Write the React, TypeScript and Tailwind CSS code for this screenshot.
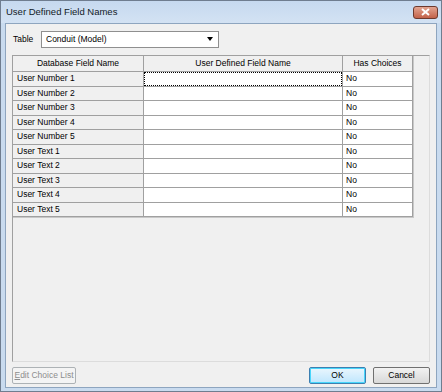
import React from "react";

const rows = [
  "User Number 1",
  "User Number 2",
  "User Number 3",
  "User Number 4",
  "User Number 5",
  "User Text 1",
  "User Text 2",
  "User Text 3",
  "User Text 4",
  "User Text 5",
];

const font = { fontFamily: '"Liberation Sans", Arial, sans-serif' };

const App = () => {
  return (
    <div
      className="w-[442px] h-[392px] flex flex-col bg-[#c9dbef] border border-[#6f7d8f] text-[8.5px] text-black"
      style={font}
    >
      {/* title bar */}
      <div className="h-[22px] shrink-0 flex items-center justify-between pl-[5px] pr-[3px] bg-gradient-to-b from-[#c6d9ef] to-[#d3e2f3]">
        <span className="text-[9.5px] text-[#111a26]">User Defined Field Names</span>
        <button className="w-[25px] h-[13px] rounded-[3px] border border-[#6d3a2e] bg-gradient-to-b from-[#e3a591] to-[#c2624a] flex items-center justify-center">
          <svg width="9" height="8" viewBox="0 0 9 8">
            <path d="M1 1 L8 7 M8 1 L1 7" stroke="#fff" strokeWidth="2" />
          </svg>
        </button>
      </div>

      <div className="flex-1 min-h-0 flex px-[4px] pb-[3px]">
        <div className="flex-1 flex flex-col bg-[#f0f0f0] border border-[#8ea5bf] px-[6px] pt-[6px] pb-[3px]">
          {/* table selector */}
          <div className="flex items-center h-[18px] shrink-0">
            <span className="w-[29px] pl-[1px]">Table</span>
            <div className="w-[178px] h-[17px] flex items-center justify-between bg-white border border-[#8f8f8f] pl-[4px] pr-[5px]">
              <span>Conduit (Model)</span>
              <span className="w-0 h-0 border-l-[3.5px] border-r-[3.5px] border-t-[4px] border-l-transparent border-r-transparent border-t-black" />
            </div>
          </div>

          {/* grid */}
          <div className="mt-[7px] flex-1 min-h-0 border border-[#a0a0a0] border-r-[#dcdcdc] border-b-[#dcdcdc] bg-[#f0f0f0] flex flex-col">
            <div className="flex flex-col w-[401px] border-b border-[#c8c8c8] border-r">
              <div className="flex h-[16px] bg-[#f0f0f0]">
                <div className="w-[131px] border-r border-b border-[#a0a0a0] flex items-center justify-center">
                  Database Field Name
                </div>
                <div className="w-[199px] border-r border-b border-[#a0a0a0] flex items-center justify-center">
                  User Defined Field Name
                </div>
                <div className="w-[70px] border-r border-b border-[#a0a0a0] flex items-center justify-center">
                  Has Choices
                </div>
              </div>
              {rows.map((r, i) => (
                <div key={r} className="flex h-[14.5px]">
                  <div className="w-[131px] bg-[#f0f0f0] border-r border-b border-[#a0a0a0] flex items-center pl-[4px]">
                    {r}
                  </div>
                  <div className="w-[199px] bg-white border-r border-b border-[#a0a0a0] flex">
                    {i === 0 && (
                      <div className="flex-1 border border-dotted border-black" />
                    )}
                  </div>
                  <div className="w-[70px] bg-white border-r border-b border-[#a0a0a0] flex items-center pl-[3px]">
                    No
                  </div>
                </div>
              ))}
            </div>
          </div>

          {/* buttons */}
          <div className="mt-[5px] flex items-center justify-between h-[17px] shrink-0">
            <button className="w-[64px] h-[17px] rounded-[2px] border border-[#adb2b5] bg-[#f4f4f4] text-[#8d8d8d]">
              <span className="underline">E</span>dit Choice List
            </button>
            <div className="flex gap-[7px]">
              <button className="w-[57px] h-[17px] rounded-[2px] border border-[#3c7fb1] bg-gradient-to-b from-[#eaf6fd] to-[#bee6fd] shadow-[inset_0_0_0_1px_#48d6fb]">
                OK
              </button>
              <button className="w-[57px] h-[17px] rounded-[2px] border border-[#707070] bg-gradient-to-b from-[#f2f2f2] to-[#d8d8d8]">
                Cancel
              </button>
            </div>
          </div>
        </div>
      </div>
    </div>
  );
};

export default App;
